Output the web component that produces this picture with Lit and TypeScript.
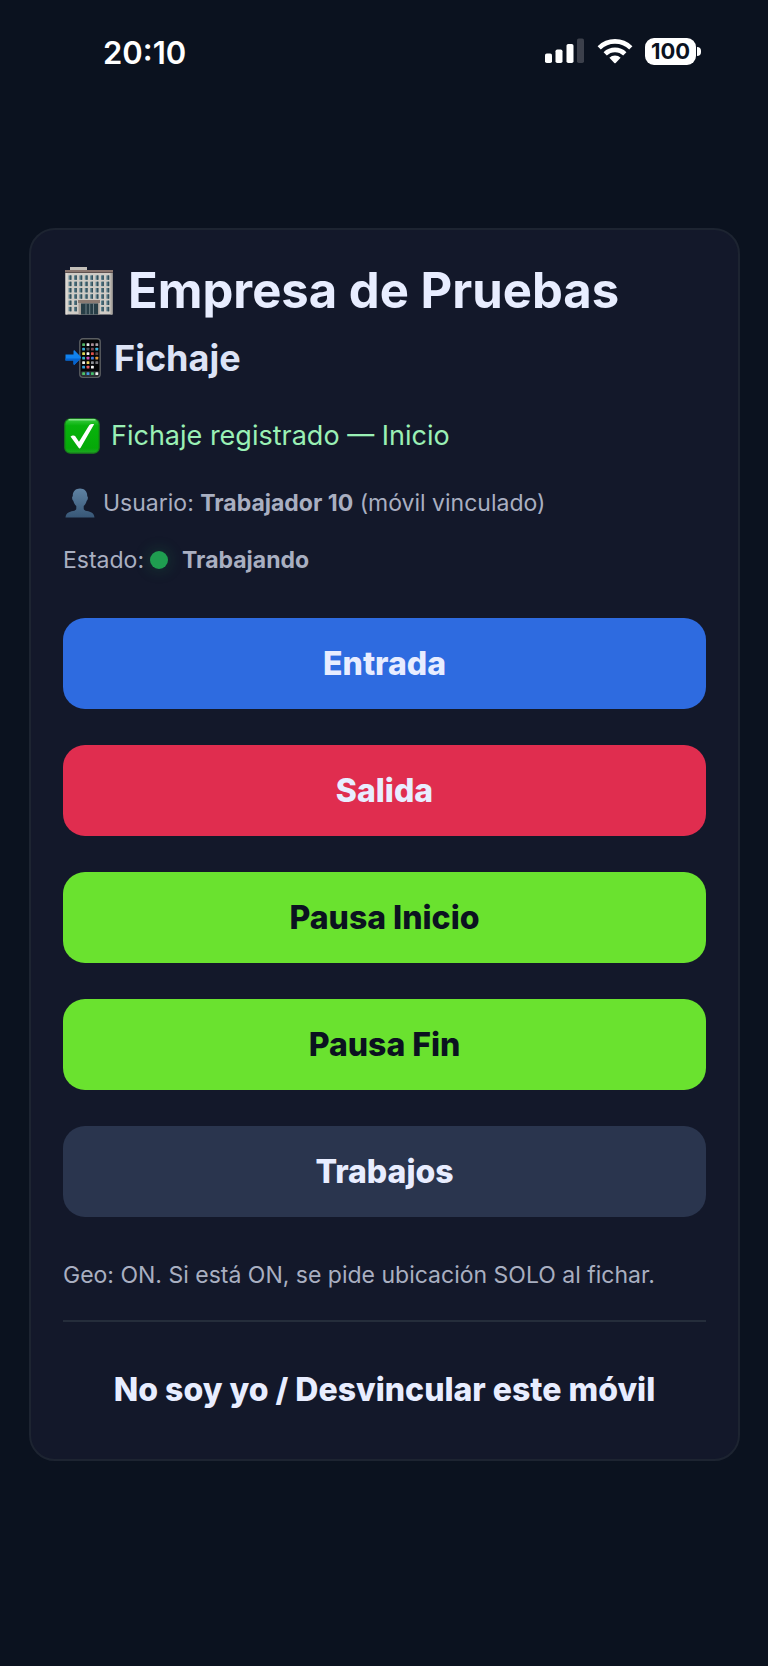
import { LitElement, html, svg, css } from "lit";
import { customElement, state } from "lit/decorators.js";
import { classMap } from "lit/directives/class-map.js";

const range = (n: number) => Array.from({ length: n }, (_, i) => i);

const buildingIcon = html`<svg class="icon" width="48" height="48" viewBox="0 0 48 48" aria-hidden="true">
  <rect x="5" y="0" width="17" height="4" fill="#c3bfb9" />
  <rect x="0" y="3" width="48" height="3" fill="#8b7770" />
  <rect x="0" y="5" width="48" height="1" fill="#5e5150" />
  <rect x="0.5" y="6" width="47" height="41.5" fill="#cfcbc5" />
  <rect x="0.5" y="6" width="2" height="41.5" fill="#dedad4" />
  <rect x="45.5" y="6" width="2" height="41.5" fill="#aba69f" />
  ${range(6).map((r) =>
    range(8).map((c) =>
      r > 3 && c > 1 && c < 6 && r > 4
        ? null
        : svg`<rect x=${3.6 + c * 5.4} y=${8.4 + r * 6.3} width="2.8" height="4.4" fill="#5d808d" /><rect x=${5 + c * 5.4} y=${8.4 + r * 6.3} width="1.4" height="4.4" fill="#34505b" />`
    )
  )}
  <rect x="13.5" y="35" width="21" height="12.5" fill="#a79f98" />
  <rect x="13" y="33" width="22" height="3" fill="#8a7a72" />
  <rect x="16" y="36.5" width="17" height="11" fill="#273d46" />
  <rect x="20.5" y="36.5" width="1" height="11" fill="#718086" />
  <rect x="24.2" y="36.5" width="1" height="11" fill="#718086" />
  <rect x="28" y="36.5" width="1" height="11" fill="#718086" />
</svg>`;

const appColors = [
  ["#51b466", "#e7e7e7", "#a78b95", "#a79da3"],
  ["#37a7d4", "#4d5158", "#7a4a54", "#38b2d9"],
  ["#dedb58", "#f3f3f3", "#e0524b", "#5b4a4a"],
  ["#35b3cf", "#c94fb3", "#4579d8", "#e39a3b"],
  ["#f0f0e8", "#e9d25c", "#8b8f95", "#77777c"],
  ["#32a3dc", "#e55c62", "#f5f5f5", "#050505"],
];

const phoneIcon = html`<svg class="icon" width="36" height="40" viewBox="0 0 36 40" aria-hidden="true">
  <rect x="14.8" y="0.8" width="20.4" height="38.4" rx="3" fill="#050608" stroke="#5b5e62" stroke-width="1.4" />
  ${appColors.map((row, r) =>
    row.map((c, i) => svg`<rect x=${17.2 + i * 4.4} y=${5.2 + r * 4.5} width="2.8" height="2.8" rx="0.6" fill=${c} />`)
  )}
  <rect x="16" y="33.2" width="18" height="4.8" rx="1" fill="#2c3236" />
  ${["#4fc36a", "#4098e8", "#42bf6b", "#f2f2f2"].map(
    (c, i) => svg`<rect x=${17.2 + i * 4.4} y="34.2" width="2.8" height="2.8" rx="0.6" fill=${c} />`
  )}
  <path d="M0.5 16.600h8v-3.600c0-.7.7-1 1.200-.5l6 6.200c.5.500.5 1 0 1.500l-6 6.200c-.5.500-1.200.200-1.200-.5v-3.500h-8z" fill="#1182ee" />
  <path d="M0.5 20.500h15.400l-6.200 6c-.5.500-1.200.100-1.200-.5v-3.600h-8z" fill="#0563cf" />
</svg>`;

const checkIcon = html`<svg class="icon check" width="36" height="36" viewBox="0 0 36 36" aria-hidden="true">
  <defs>
    <linearGradient id="green" x1="0" y1="0" x2="0" y2="1">
      <stop offset="0" stop-color="#3ccc43" />
      <stop offset="0.2" stop-color="#08b30c" />
      <stop offset="0.85" stop-color="#05a908" />
      <stop offset="1" stop-color="#21a626" />
    </linearGradient>
  </defs>
  <rect x="0.8" y="0.8" width="34.4" height="34.4" rx="5.5" fill="url(#green)" stroke="#17791b" stroke-width="1.2" />
  <path d="M5 1.800h26" stroke="#86e58a" stroke-width="1.4" stroke-linecap="round" />
  <path d="M6.500 18.500c1-.9 3.600-1.700 4.600-.5l3.900 5.800 10.200-16.500c.7-1 3.700-1.600 4.900-1L16.600 29.700c-.5.900-1.500.9-2 0z" fill="#fff" />
</svg>`;

const personIcon = html`<svg class="icon" width="30" height="30" viewBox="0 0 30 30" aria-hidden="true">
  <defs>
    <linearGradient id="bust" x1="0" y1="0" x2="0" y2="1">
      <stop offset="0" stop-color="#5f82a3" />
      <stop offset="1" stop-color="#385777" />
    </linearGradient>
  </defs>
  <path d="M15 0.500c4.500 0 7.500 3 7.200 7.800 1.100.2.900 3.300-.5 4.500-.5 2.300-1.600 4-3 5.200v2.500c0 1.400 1.200 2 3.200 2.600 4 1 7 1.800 7.600 6.400H0.500c.6-4.600 3.600-5.400 7.600-6.400 2-.6 3.200-1.200 3.200-2.600V18c-1.400-1.200-2.500-2.900-3-5.200-1.400-1.200-1.600-4.300-.5-4.500C7.500 3.500 10.500.5 15 .5z" fill="url(#bust)" />
</svg>`;

const signalIcon = html`<svg width="40" height="26" viewBox="0 0 40 26" role="img" aria-label="Señal">
  <rect x="0" y="15.5" width="7" height="9.5" rx="1.8" fill="#fff" />
  <rect x="10.5" y="11.5" width="7" height="13.5" rx="1.8" fill="#fff" />
  <rect x="21.5" y="6" width="7" height="19" rx="1.8" fill="#fff" />
  <rect x="32" y="0.5" width="7" height="24.5" rx="1.8" fill="#3c404b" />
</svg>`;

const wifiIcon = html`<svg width="36" height="26" viewBox="0 0 36 26" role="img" aria-label="Wi-Fi">
  <g fill="none" stroke="#fff" stroke-width="4.6">
    <path d="M2.200 9.800a22.600 22.600 0 0 1 31.600 0" />
    <path d="M8.200 15.900a14 14 0 0 1 19.600 0" />
  </g>
  <path d="M12.400 19.800a8 8 0 0 1 11.200 0L18.700 24.900a1 1 0 0 1-1.400 0z" fill="#fff" />
</svg>`;

interface Action {
  label: string;
  tone: "primary" | "danger" | "pause" | "neutral";
}

@customElement("status-bar")
export class StatusBar extends LitElement {
  static styles = css`
    :host {
      display: flex;
      align-items: center;
      justify-content: space-between;
      height: 102px;
      padding: 0 67px 0 103px;
      box-sizing: border-box;
      color: #fff;
    }
    .time {
      padding-top: 4px;
      font-size: 31px;
      line-height: 40px;
      font-weight: 600;
    }
    .indicators {
      display: flex;
      align-items: center;
      gap: 12px;
    }
    .indicators svg {
      display: block;
    }
    .battery {
      display: flex;
      align-items: center;
      gap: 1px;
    }
    .level {
      width: 51px;
      height: 27px;
      border-radius: 9px;
      background: #fff;
      color: #0b121f;
      font-size: 22px;
      line-height: 27px;
      font-weight: 700;
      text-align: center;
    }
    .tip {
      width: 4px;
      height: 9px;
      border-radius: 0 4px 4px 0;
      background: #fff;
    }
  `;

  render() {
    return html`
      <time class="time">20:10</time>
      <div class="indicators">
        ${signalIcon} ${wifiIcon}
        <div class="battery">
          <div class="level">100</div>
          <div class="tip"></div>
        </div>
      </div>
    `;
  }
}

@customElement("app-root")
export class AppRoot extends LitElement {
  static styles = css`
    :host {
      display: block;
      min-height: 100vh;
      box-sizing: border-box;
      background: #0b121f;
      color: #e8edff;
      font-family: Inter, "Liberation Sans", sans-serif;
    }
    .page {
      padding: 126px 28px 126px 29px;
    }
    .card {
      box-sizing: border-box;
      max-width: 960px;
      margin: 0 auto;
      padding: 33px 32px 24px;
      border: 2px solid #1d2431;
      border-radius: 26px;
      background: #13182a;
    }
    h1,
    h2,
    p {
      display: flex;
      align-items: center;
      margin: 0;
    }
    .icon {
      flex: none;
      display: block;
      margin-left: 2px;
    }
    .check {
      margin-left: 1px;
    }
    h1 {
      gap: 15px;
      font-size: 49px;
      line-height: 56px;
      font-weight: 700;
    }
    h2 {
      gap: 13px;
      margin-top: 17px;
      font-size: 36px;
      line-height: 44px;
      font-weight: 700;
      color: #dde3f6;
    }
    .ok {
      gap: 11px;
      margin-top: 36px;
      font-size: 27px;
      line-height: 40px;
      color: #9af0b5;
    }
    .muted {
      font-size: 23px;
      line-height: 32px;
      color: #a9afc1;
    }
    .user {
      gap: 8px;
      margin-top: 31px;
    }
    .state {
      gap: 6px;
      margin-top: 25px;
    }
    .dot {
      width: 18px;
      height: 18px;
      margin-right: 8px;
      border-radius: 50%;
      background: #1f9d50;
      box-shadow: 0 0 16px rgba(31, 157, 80, 0.3);
    }
    .actions {
      display: grid;
      gap: 36px;
      margin-top: 42px;
    }
    button {
      width: 100%;
      min-height: 91px;
      padding: 0 16px;
      border: 0;
      border-radius: 22px;
      background: transparent;
      color: #e8edff;
      font: inherit;
      font-size: 32px;
      line-height: 40px;
      font-weight: 800;
      cursor: pointer;
    }
    .primary {
      background: #2e6be0;
    }
    .danger {
      background: #e02d4f;
    }
    .pause {
      background: #6ae22f;
      color: #0b1220;
    }
    .neutral {
      background: #2a354e;
    }
    .geo {
      margin-top: 42px;
    }
    hr {
      height: 2px;
      margin: 29px 0 22px;
      border: 0;
      background: #252d3b;
    }
  `;

  @state() private actions: Action[] = [
    { label: "Entrada", tone: "primary" },
    { label: "Salida", tone: "danger" },
    { label: "Pausa Inicio", tone: "pause" },
    { label: "Pausa Fin", tone: "pause" },
    { label: "Trabajos", tone: "neutral" },
  ];

  render() {
    return html`
      <status-bar></status-bar>
      <main class="page">
        <section class="card">
          <h1>${buildingIcon}<span>Empresa de Pruebas</span></h1>
          <h2>${phoneIcon}<span>Fichaje</span></h2>
          <p class="ok" role="status">${checkIcon}<span>Fichaje registrado — Inicio</span></p>
          <p class="muted user">
            ${personIcon}<span>Usuario: <b>Trabajador 10</b> (móvil vinculado)</span>
          </p>
          <p class="muted state"><span>Estado:</span><span class="dot"></span><b>Trabajando</b></p>
          <div class="actions">
            ${this.actions.map(
              (a) => html`<button type="button" class=${classMap({ [a.tone]: true })}>${a.label}</button>`
            )}
          </div>
          <p class="muted geo">Geo: ON. Si está ON, se pide ubicación SOLO al fichar.</p>
          <hr />
          <button type="button">No soy yo / Desvincular este móvil</button>
        </section>
      </main>
    `;
  }
}
